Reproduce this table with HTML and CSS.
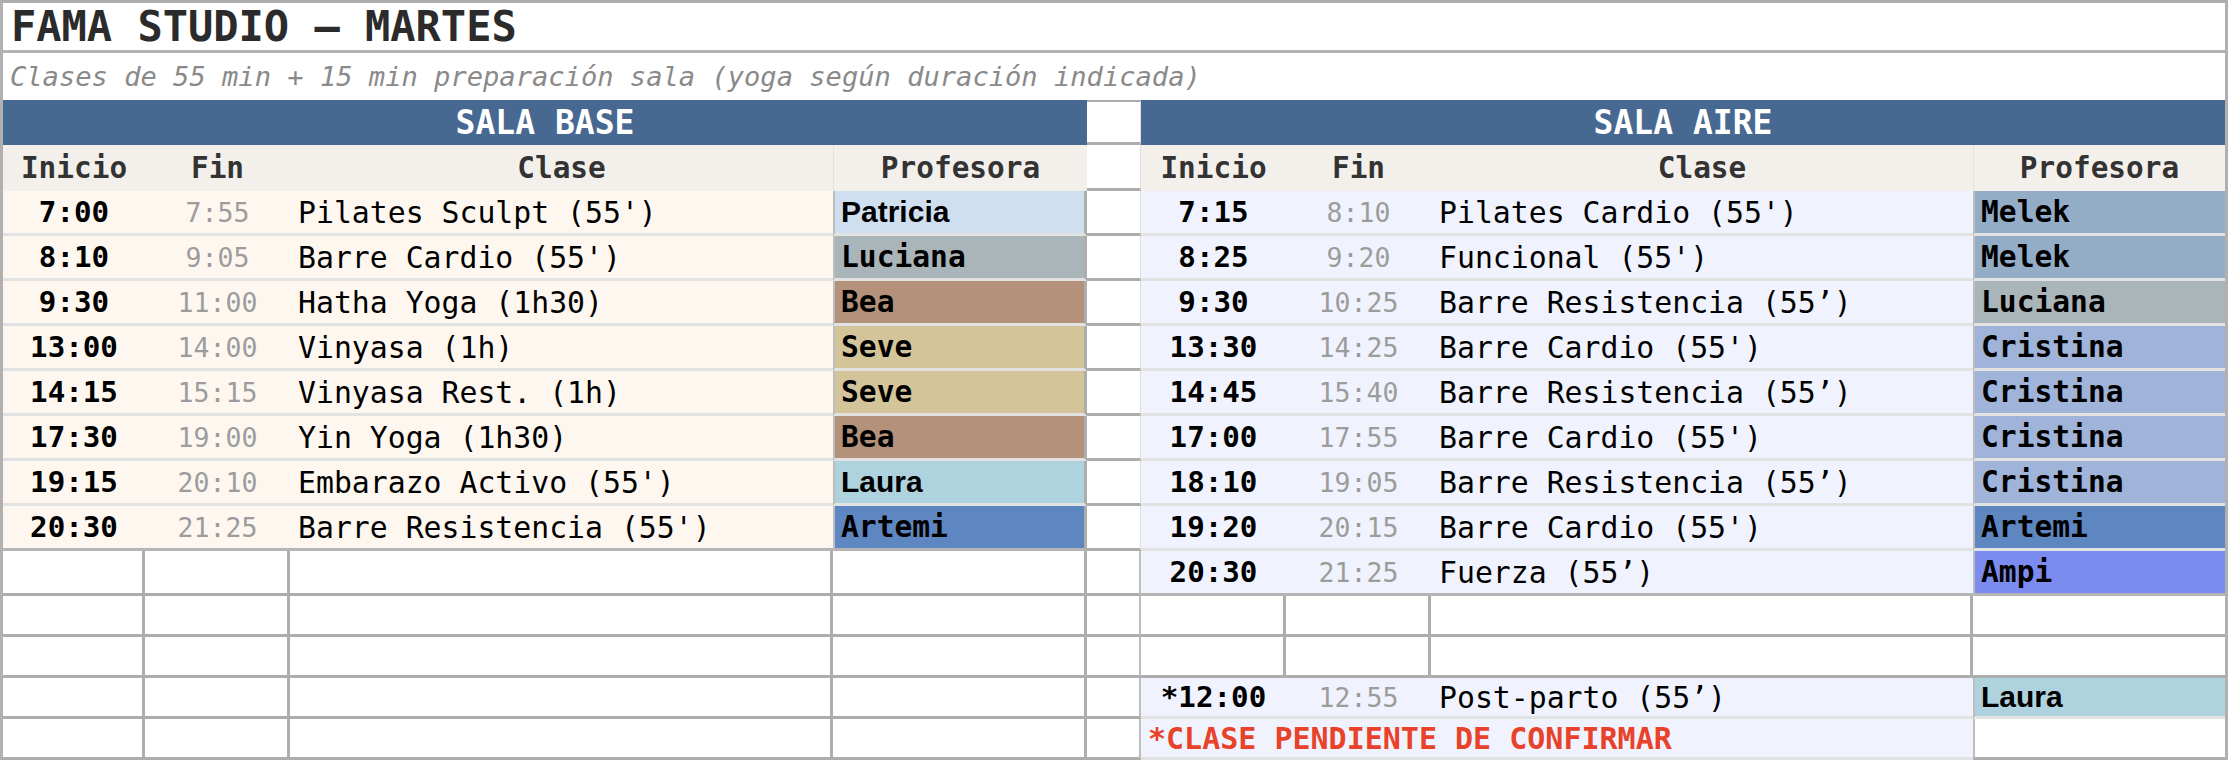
FILE: index.html
```html
<!DOCTYPE html>
<html lang="es">
<head>
<meta charset="utf-8">
<title>FAMA STUDIO — MARTES</title>
<link rel="stylesheet" href="styles.css">
</head>
<body>
<div class="sheet">
  <div class="title">FAMA STUDIO — MARTES</div>
  <div class="sub">Clases de 55 min + 15 min preparación sala (yoga según duración indicada)</div>

  <div class="sala">SALA BASE</div>
  <div class="gap gap-top"></div>
  <div class="sala">SALA AIRE</div>

  <div class="hd">Inicio</div><div class="hd">Fin</div><div class="hd">Clase</div><div class="hd hd-prof">Profesora</div>
  <div class="gap"></div>
  <div class="hd">Inicio</div><div class="hd">Fin</div><div class="hd">Clase</div><div class="hd hd-prof">Profesora</div>

  <!-- row 1 -->
  <div class="d base t">7:00</div><div class="d base f">7:55</div><div class="d base c">Pilates Sculpt (55')</div><div class="d p pl sans c-patricia">Patricia</div>
  <div class="gap"></div>
  <div class="d aire t">7:15</div><div class="d aire f">8:10</div><div class="d aire c">Pilates Cardio (55')</div><div class="d p c-melek">Melek</div>
  <!-- row 2 -->
  <div class="d base t">8:10</div><div class="d base f">9:05</div><div class="d base c">Barre Cardio (55')</div><div class="d p pl c-luciana">Luciana</div>
  <div class="gap"></div>
  <div class="d aire t">8:25</div><div class="d aire f">9:20</div><div class="d aire c">Funcional (55')</div><div class="d p c-melek">Melek</div>
  <!-- row 3 -->
  <div class="d base t">9:30</div><div class="d base f">11:00</div><div class="d base c">Hatha Yoga (1h30)</div><div class="d p pl c-bea">Bea</div>
  <div class="gap"></div>
  <div class="d aire t">9:30</div><div class="d aire f">10:25</div><div class="d aire c">Barre Resistencia (55’)</div><div class="d p c-luciana">Luciana</div>
  <!-- row 4 -->
  <div class="d base t">13:00</div><div class="d base f">14:00</div><div class="d base c">Vinyasa (1h)</div><div class="d p pl c-seve">Seve</div>
  <div class="gap"></div>
  <div class="d aire t">13:30</div><div class="d aire f">14:25</div><div class="d aire c">Barre Cardio (55')</div><div class="d p c-cristina">Cristina</div>
  <!-- row 5 -->
  <div class="d base t">14:15</div><div class="d base f">15:15</div><div class="d base c">Vinyasa Rest. (1h)</div><div class="d p pl c-seve">Seve</div>
  <div class="gap"></div>
  <div class="d aire t">14:45</div><div class="d aire f">15:40</div><div class="d aire c">Barre Resistencia (55’)</div><div class="d p c-cristina">Cristina</div>
  <!-- row 6 -->
  <div class="d base t">17:30</div><div class="d base f">19:00</div><div class="d base c">Yin Yoga (1h30)</div><div class="d p pl c-bea">Bea</div>
  <div class="gap"></div>
  <div class="d aire t">17:00</div><div class="d aire f">17:55</div><div class="d aire c">Barre Cardio (55')</div><div class="d p c-cristina">Cristina</div>
  <!-- row 7 -->
  <div class="d base t">19:15</div><div class="d base f">20:10</div><div class="d base c">Embarazo Activo (55')</div><div class="d p pl sans c-laura">Laura</div>
  <div class="gap"></div>
  <div class="d aire t">18:10</div><div class="d aire f">19:05</div><div class="d aire c">Barre Resistencia (55’)</div><div class="d p c-cristina">Cristina</div>
  <!-- row 8 -->
  <div class="d base t last">20:30</div><div class="d base f last">21:25</div><div class="d base c last">Barre Resistencia (55')</div><div class="d p pl last c-artemi">Artemi</div>
  <div class="gap"></div>
  <div class="d aire t">19:20</div><div class="d aire f">20:15</div><div class="d aire c">Barre Cardio (55')</div><div class="d p c-artemi">Artemi</div>
  <!-- row 9 -->
  <div class="e"></div><div class="e"></div><div class="e"></div><div class="e"></div>
  <div class="gap gap-side"></div>
  <div class="d aire t last">20:30</div><div class="d aire f last">21:25</div><div class="d aire c last">Fuerza (55’)</div><div class="d p last c-ampi">Ampi</div>
  <!-- row 10 -->
  <div class="e"></div><div class="e"></div><div class="e"></div><div class="e"></div>
  <div class="gap gap-side"></div>
  <div class="e"></div><div class="e"></div><div class="e"></div><div class="e er"></div>
  <!-- row 11 -->
  <div class="e"></div><div class="e"></div><div class="e"></div><div class="e"></div>
  <div class="gap gap-side"></div>
  <div class="e"></div><div class="e"></div><div class="e"></div><div class="e er"></div>
  <!-- row 12 -->
  <div class="e"></div><div class="e"></div><div class="e"></div><div class="e"></div>
  <div class="gap gap-side"></div>
  <div class="d aire t">*12:00</div><div class="d aire f">12:55</div><div class="d aire c">Post-parto (55’)</div><div class="d p sans c-laura">Laura</div>
  <!-- row 13 -->
  <div class="e"></div><div class="e"></div><div class="e"></div><div class="e"></div>
  <div class="gap gap-side"></div>
  <div class="d aire note">*CLASE PENDIENTE DE CONFIRMAR</div><div class="e er pe"></div>
</div>
</body>
</html>
```
FILE: styles.css
```css
html, body {
  margin: 0;
  padding: 0;
  background: #ffffff;
}

.sheet {
  box-sizing: border-box;
  width: 2228px;
  display: grid;
  grid-template-columns: 142px 145px 543px 254px 54px 145px 145px 542px 252px;
  grid-template-rows: 50px 47px 45px 46px repeat(9, 45px) repeat(4, 41px);
  border-top: 3px solid #adadad;
  border-left: 3px solid #b0b0b0;
  border-right: 3px solid #b0b0b0;
  font-family: "DejaVu Sans Mono", "Liberation Mono", monospace;
  color: #000;
}

.sheet > div {
  box-sizing: border-box;
  display: flex;
  align-items: center;
  min-width: 0;
  white-space: nowrap;
  overflow: hidden;
}

.title {
  grid-column: 1 / -1;
  font-size: 42px;
  font-weight: bold;
  color: #2b2b2b;
  padding-left: 8px;
  border-bottom: 3px solid #b3b3b3;
}

.sub {
  grid-column: 1 / -1;
  font-size: 27.1px;
  font-style: italic;
  color: #8a8a8a;
  padding-left: 7px;
}

.sala {
  grid-column: span 4;
  justify-content: center;
  background: #476891;
  color: #ffffff;
  font-weight: bold;
  font-size: 33px;
}

.gap {
  background: #ffffff;
  border-bottom: 3px solid #adadad;
  border-right: 1px solid #dcdcdc;
}

.gap-top {
  border-top: 2px solid #adadad;
}

.gap-side {
  border-right: 2px solid #bdbdbd;
}

.hd {
  justify-content: center;
  background: #f3f0eb;
  color: #333333;
  font-weight: bold;
  font-size: 29.4px;
}

.hd-prof {
  border-left: 1px solid #e6e3de;
}

.d {
  border-bottom: 3px solid #e2e2e2;
}

.base {
  background: #fef7f0;
}

.aire {
  background: #f0f3fd;
}

.t {
  justify-content: center;
  font-weight: bold;
  font-size: 29.2px;
}

.f {
  justify-content: center;
  font-size: 26.5px;
  color: #9c9c9c;
}

.c {
  padding-left: 8px;
  font-size: 29.8px;
}

.p {
  padding-left: 6px;
  font-weight: bold;
  font-size: 29.6px;
  border-left: 2px solid #bdbdbd;
}

.pl {
  border-right: 3px solid #adadad;
}

.sans {
  font-family: "Liberation Sans", Arial, sans-serif;
  font-size: 30px;
}

.last {
  border-bottom-color: #b5b5b5;
}

.note {
  grid-column: span 3;
  padding-left: 7px;
  color: #e8422a;
  font-weight: bold;
  font-size: 30px;
}

.e {
  background: #ffffff;
  border-right: 3px solid #adadad;
  border-bottom: 3px solid #adadad;
}

.er {
  border-right: none;
}

.pe {
  border-left: 2px solid #bdbdbd;
}

.c-patricia { background: #cfdff0; }
.c-luciana  { background: #aab5b9; }
.c-bea      { background: #b3917b; }
.c-seve     { background: #d4c499; }
.c-laura    { background: #aed3de; }
.c-artemi   { background: #5e87c1; }
.c-melek    { background: #93adc6; }
.c-cristina { background: #a0b4d9; }
.c-ampi     { background: #7c8bef; }
```
